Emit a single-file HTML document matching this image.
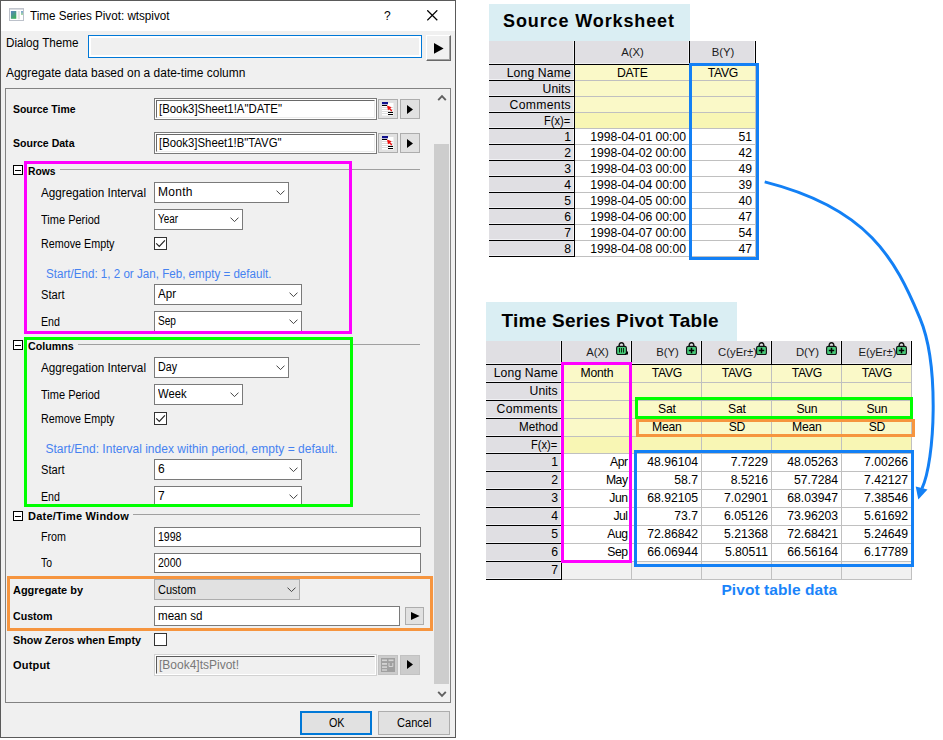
<!DOCTYPE html>
<html><head><meta charset="utf-8"><title>Time Series Pivot</title>
<style>
html,body{margin:0;padding:0;background:#fff;}
body{width:943px;height:740px;position:relative;overflow:hidden;font-family:"Liberation Sans",sans-serif;}
div,svg,.t{position:absolute;}
.t{white-space:pre;transform-origin:0 0;}
</style></head>
<body>
<div style="left:0px;top:0px;width:456px;height:738px;background:#f0f0f0;border:1px solid #5a5a5a;box-sizing:border-box;"></div>
<div style="left:1px;top:1px;width:454px;height:30px;background:#fff;"></div>
<svg style="left:9px;top:8px" width="15" height="13" viewBox="0 0 15 13">
<defs><linearGradient id="ga" x1="0" y1="0" x2="0.6" y2="1"><stop offset="0" stop-color="#5a82c4"/><stop offset="1" stop-color="#3fae5c"/></linearGradient>
<linearGradient id="gb" x1="0" y1="0" x2="0" y2="1"><stop offset="0" stop-color="#7aa0d4"/><stop offset="1" stop-color="#a8e0a0"/></linearGradient></defs>
<rect x="0.5" y="0.5" width="14" height="12" fill="#fff" stroke="#bcc1ca"/><rect x="0" y="0" width="15" height="1.6" fill="#c2c6ce"/>
<rect x="1.9" y="3" width="5.4" height="7.8" fill="url(#ga)"/><rect x="8.7" y="3" width="2.2" height="8.3" fill="#e4e4e4"/><rect x="12" y="3" width="2" height="4" fill="url(#gb)"/></svg>
<span class="t" style="left:29.80px;top:10px;font-size:12px;line-height:12px;color:#000;transform:scaleX(0.9714);">Time Series Pivot: wtspivot</span>
<span class="t" style="left:384.00px;top:10px;font-size:12px;line-height:12px;color:#000;">?</span>
<svg style="left:427px;top:9.5px" width="11" height="11" viewBox="0 0 11 11"><path d="M0.3 0.3 L10.3 10.3 M10.3 0.3 L0.3 10.3" stroke="#000" stroke-width="1.25" fill="none"/></svg>
<span class="t" style="left:5.50px;top:37px;font-size:12px;line-height:12px;color:#000;transform:scaleX(0.9734);">Dialog Theme</span>
<div style="left:88px;top:35px;width:334px;height:23px;border:1px solid #0078d7;box-sizing:border-box;background:#f0f0f0;"></div>
<div style="left:89px;top:36px;width:332px;height:21px;border:2px solid #fff;box-sizing:border-box;"></div>
<div style="left:426px;top:35px;width:25px;height:26px;box-sizing:border-box;background:#f0f0f0;border-top:1px solid #fff;border-left:1px solid #fff;border-right:1px solid #696969;border-bottom:1px solid #696969;"></div>
<div style="left:427px;top:36px;width:23px;height:24px;box-sizing:border-box;border-right:1px solid #a0a0a0;border-bottom:1px solid #a0a0a0;"></div>
<svg style="left:433.5px;top:42.8px" width="10" height="11" viewBox="0 0 10 11"><path d="M0 0 L9.6 5.4 L0 10.8 Z" fill="#000"/></svg>
<span class="t" style="left:5.50px;top:67px;font-size:12px;line-height:12px;color:#000;transform:scaleX(0.9964);">Aggregate data based on a date-time column</span>
<div style="left:5px;top:88px;width:446px;height:615px;box-sizing:border-box;border:1px solid #828282;background:#f0f0f0;"></div>
<div style="left:434px;top:89px;width:16px;height:613px;background:#f0f0f0;"></div>
<div style="left:434px;top:144px;width:15px;height:540px;background:#cdcdcd;"></div>
<svg style="left:436.7px;top:93.6px" width="10" height="7" viewBox="0 0 10 7"><path d="M1.2 6.2 L5 2.2 L8.8 6.2" stroke="#606060" stroke-width="1.9" fill="none"/></svg>
<svg style="left:436.7px;top:690.7px" width="10" height="7" viewBox="0 0 10 7"><path d="M1.2 0.8 L5 4.8 L8.8 0.8" stroke="#606060" stroke-width="1.9" fill="none"/></svg>
<span class="t" style="left:13.00px;top:104px;font-size:11px;line-height:11px;color:#000;font-weight:700;transform:scaleX(0.9494);">Source Time</span>
<div style="left:154px;top:98px;width:223px;height:22px;box-sizing:border-box;background:#fff;border:1px solid #7a7a7a;"></div>
<div style="left:156px;top:100px;width:219px;height:18px;box-sizing:border-box;border:1px solid #ececec;border-top-color:#696969;border-left-color:#696969;"></div>
<span class="t" style="left:159.00px;top:103px;font-size:12px;line-height:12px;color:#000;transform:scaleX(0.9483);">[Book3]Sheet1!A"DATE"</span>
<div style="left:378px;top:99px;width:20px;height:20px;box-sizing:border-box;background:#e1e1e1;border:1px solid #adadad;"></div>
<svg style="left:382px;top:102px" width="12" height="14" viewBox="0 0 12 14">
<rect x="0" y="1" width="11.5" height="12.5" fill="#fff"/>
<path d="M0 5.5 H11 M0 7.5 H11 M0 9.5 H11 M0 11.5 H6" stroke="#dcdcdc" stroke-width="1"/>
<rect x="0" y="0" width="6" height="2.3" fill="#10108c"/><rect x="0" y="3" width="5" height="1" fill="#000"/>
<path d="M5 3.6 L9.6 5.2 L8.2 6.3 L10.3 8.6 L9.3 9.5 L7.2 7.2 L6 8.6 Z" fill="#f01010"/>
<rect x="6" y="10" width="5.4" height="1" fill="#000" shape-rendering="crispEdges"/><rect x="6" y="12" width="5.4" height="1" fill="#000" shape-rendering="crispEdges"/></svg>
<div style="left:400px;top:99px;width:20px;height:20px;box-sizing:border-box;background:#e1e1e1;border:1px solid #adadad;"></div>
<svg style="left:407px;top:104.5px" width="6" height="9" viewBox="0 0 6 9"><path d="M0 0 L6 4.5 L0 9 Z" fill="#000"/></svg>
<span class="t" style="left:13.00px;top:138px;font-size:11px;line-height:11px;color:#000;font-weight:700;transform:scaleX(0.9579);">Source Data</span>
<div style="left:154px;top:132px;width:223px;height:22px;box-sizing:border-box;background:#fff;border:1px solid #7a7a7a;"></div>
<div style="left:156px;top:134px;width:219px;height:18px;box-sizing:border-box;border:1px solid #ececec;border-top-color:#696969;border-left-color:#696969;"></div>
<span class="t" style="left:159.00px;top:137px;font-size:12px;line-height:12px;color:#000;transform:scaleX(0.9461);">[Book3]Sheet1!B"TAVG"</span>
<div style="left:378px;top:133px;width:20px;height:20px;box-sizing:border-box;background:#e1e1e1;border:1px solid #adadad;"></div>
<svg style="left:382px;top:136px" width="12" height="14" viewBox="0 0 12 14">
<rect x="0" y="1" width="11.5" height="12.5" fill="#fff"/>
<path d="M0 5.5 H11 M0 7.5 H11 M0 9.5 H11 M0 11.5 H6" stroke="#dcdcdc" stroke-width="1"/>
<rect x="0" y="0" width="6" height="2.3" fill="#10108c"/><rect x="0" y="3" width="5" height="1" fill="#000"/>
<path d="M5 3.6 L9.6 5.2 L8.2 6.3 L10.3 8.6 L9.3 9.5 L7.2 7.2 L6 8.6 Z" fill="#f01010"/>
<rect x="6" y="10" width="5.4" height="1" fill="#000" shape-rendering="crispEdges"/><rect x="6" y="12" width="5.4" height="1" fill="#000" shape-rendering="crispEdges"/></svg>
<div style="left:400px;top:133px;width:20px;height:20px;box-sizing:border-box;background:#e1e1e1;border:1px solid #adadad;"></div>
<svg style="left:407px;top:138.5px" width="6" height="9" viewBox="0 0 6 9"><path d="M0 0 L6 4.5 L0 9 Z" fill="#000"/></svg>
<svg style="left:13px;top:165px" width="10" height="10" viewBox="0 0 10 10"><rect x="0.5" y="0.5" width="9" height="9" fill="#fff" stroke="#000" stroke-width="1.1" shape-rendering="crispEdges"/><rect x="2" y="5" width="6" height="1" fill="#000" shape-rendering="crispEdges"/></svg>
<span class="t" style="left:28.00px;top:166px;font-size:11px;line-height:11px;color:#000;font-weight:700;transform:scaleX(0.9372);">Rows</span>
<div style="left:59.5px;top:169px;width:360.5px;height:1px;background:#a0a0a0;"></div>
<span class="t" style="left:41.00px;top:187px;font-size:12px;line-height:12px;color:#000;transform:scaleX(0.9776);">Aggregation Interval</span>
<div style="left:154px;top:182px;width:135px;height:21px;box-sizing:border-box;background:#fff;border:1px solid #7a7a7a;"></div>
<span class="t" style="left:158.00px;top:186px;font-size:12px;line-height:12px;color:#000;letter-spacing:0.285px;">Month</span>
<svg style="left:275.5px;top:190px" width="9" height="6" viewBox="0 0 9 6"><path d="M0.5 0.6 L4.5 4.6 L8.5 0.6" stroke="#444" stroke-width="1" fill="none"/></svg>
<span class="t" style="left:41.00px;top:214px;font-size:12px;line-height:12px;color:#000;transform:scaleX(0.9183);">Time Period</span>
<div style="left:154px;top:209px;width:89px;height:21px;box-sizing:border-box;background:#fff;border:1px solid #7a7a7a;"></div>
<span class="t" style="left:158.00px;top:213px;font-size:12px;line-height:12px;color:#000;transform:scaleX(0.8247);">Year</span>
<svg style="left:229.5px;top:217px" width="9" height="6" viewBox="0 0 9 6"><path d="M0.5 0.6 L4.5 4.6 L8.5 0.6" stroke="#444" stroke-width="1" fill="none"/></svg>
<span class="t" style="left:41.00px;top:238px;font-size:12px;line-height:12px;color:#000;transform:scaleX(0.8960);">Remove Empty</span>
<div style="left:154px;top:237px;width:13px;height:13px;box-sizing:border-box;background:#fff;border:1px solid #333;"></div>
<svg style="left:154px;top:237px" width="13" height="13" viewBox="0 0 13 13"><path d="M2.2 6.3 L5.3 9.5 L10.9 3.4" stroke="#222" stroke-width="1.15" fill="none"/></svg>
<span class="t" style="left:45.50px;top:268px;font-size:12px;line-height:12px;color:#4682f0;transform:scaleX(0.9672);">Start/End: 1, 2 or Jan, Feb, empty = default.</span>
<span class="t" style="left:41.00px;top:289px;font-size:12px;line-height:12px;color:#000;transform:scaleX(0.9273);">Start</span>
<div style="left:154px;top:284px;width:148px;height:21px;box-sizing:border-box;background:#fff;border:1px solid #7a7a7a;"></div>
<span class="t" style="left:158.00px;top:288px;font-size:12px;line-height:12px;color:#000;transform:scaleX(0.9632);">Apr</span>
<svg style="left:288.5px;top:292px" width="9" height="6" viewBox="0 0 9 6"><path d="M0.5 0.6 L4.5 4.6 L8.5 0.6" stroke="#444" stroke-width="1" fill="none"/></svg>
<span class="t" style="left:41.00px;top:316px;font-size:12px;line-height:12px;color:#000;transform:scaleX(0.8895);">End</span>
<div style="left:154px;top:311px;width:148px;height:21px;box-sizing:border-box;background:#fff;border:1px solid #7a7a7a;"></div>
<span class="t" style="left:158.00px;top:315px;font-size:12px;line-height:12px;color:#000;transform:scaleX(0.8427);">Sep</span>
<svg style="left:288.5px;top:319px" width="9" height="6" viewBox="0 0 9 6"><path d="M0.5 0.6 L4.5 4.6 L8.5 0.6" stroke="#444" stroke-width="1" fill="none"/></svg>
<svg style="left:13px;top:340px" width="10" height="10" viewBox="0 0 10 10"><rect x="0.5" y="0.5" width="9" height="9" fill="#fff" stroke="#000" stroke-width="1.1" shape-rendering="crispEdges"/><rect x="2" y="5" width="6" height="1" fill="#000" shape-rendering="crispEdges"/></svg>
<span class="t" style="left:28.00px;top:341px;font-size:11px;line-height:11px;color:#000;font-weight:700;transform:scaleX(0.9721);">Columns</span>
<div style="left:77.75px;top:344px;width:342.25px;height:1px;background:#a0a0a0;"></div>
<span class="t" style="left:41.00px;top:362px;font-size:12px;line-height:12px;color:#000;transform:scaleX(0.9776);">Aggregation Interval</span>
<div style="left:154px;top:357px;width:135px;height:21px;box-sizing:border-box;background:#fff;border:1px solid #7a7a7a;"></div>
<span class="t" style="left:158.00px;top:361px;font-size:12px;line-height:12px;color:#000;transform:scaleX(0.8902);">Day</span>
<svg style="left:275.5px;top:365px" width="9" height="6" viewBox="0 0 9 6"><path d="M0.5 0.6 L4.5 4.6 L8.5 0.6" stroke="#444" stroke-width="1" fill="none"/></svg>
<span class="t" style="left:41.00px;top:389px;font-size:12px;line-height:12px;color:#000;transform:scaleX(0.9183);">Time Period</span>
<div style="left:154px;top:384px;width:89px;height:21px;box-sizing:border-box;background:#fff;border:1px solid #7a7a7a;"></div>
<span class="t" style="left:158.00px;top:388px;font-size:12px;line-height:12px;color:#000;transform:scaleX(0.9354);">Week</span>
<svg style="left:229.5px;top:392px" width="9" height="6" viewBox="0 0 9 6"><path d="M0.5 0.6 L4.5 4.6 L8.5 0.6" stroke="#444" stroke-width="1" fill="none"/></svg>
<span class="t" style="left:41.00px;top:413px;font-size:12px;line-height:12px;color:#000;transform:scaleX(0.8960);">Remove Empty</span>
<div style="left:154px;top:412px;width:13px;height:13px;box-sizing:border-box;background:#fff;border:1px solid #333;"></div>
<svg style="left:154px;top:412px" width="13" height="13" viewBox="0 0 13 13"><path d="M2.2 6.3 L5.3 9.5 L10.9 3.4" stroke="#222" stroke-width="1.15" fill="none"/></svg>
<span class="t" style="left:45.50px;top:443px;font-size:12px;line-height:12px;color:#4682f0;letter-spacing:0.015px;">Start/End: Interval index within period, empty = default.</span>
<span class="t" style="left:41.00px;top:464px;font-size:12px;line-height:12px;color:#000;transform:scaleX(0.9273);">Start</span>
<div style="left:154px;top:459px;width:148px;height:21px;box-sizing:border-box;background:#fff;border:1px solid #7a7a7a;"></div>
<span class="t" style="left:158.00px;top:463px;font-size:12px;line-height:12px;color:#000;">6</span>
<svg style="left:288.5px;top:467px" width="9" height="6" viewBox="0 0 9 6"><path d="M0.5 0.6 L4.5 4.6 L8.5 0.6" stroke="#444" stroke-width="1" fill="none"/></svg>
<span class="t" style="left:41.00px;top:491px;font-size:12px;line-height:12px;color:#000;transform:scaleX(0.8895);">End</span>
<div style="left:154px;top:486px;width:148px;height:21px;box-sizing:border-box;background:#fff;border:1px solid #7a7a7a;"></div>
<span class="t" style="left:158.00px;top:490px;font-size:12px;line-height:12px;color:#000;">7</span>
<svg style="left:288.5px;top:494px" width="9" height="6" viewBox="0 0 9 6"><path d="M0.5 0.6 L4.5 4.6 L8.5 0.6" stroke="#444" stroke-width="1" fill="none"/></svg>
<svg style="left:13px;top:511px" width="10" height="10" viewBox="0 0 10 10"><rect x="0.5" y="0.5" width="9" height="9" fill="#fff" stroke="#000" stroke-width="1.1" shape-rendering="crispEdges"/><rect x="2" y="5" width="6" height="1" fill="#000" shape-rendering="crispEdges"/></svg>
<span class="t" style="left:28.00px;top:511px;font-size:11px;line-height:11px;color:#000;font-weight:700;letter-spacing:0.217px;">Date/Time Window</span>
<div style="left:133px;top:514px;width:287px;height:1px;background:#a0a0a0;"></div>
<span class="t" style="left:41.00px;top:531px;font-size:12px;line-height:12px;color:#000;transform:scaleX(0.8929);">From</span>
<div style="left:154px;top:527px;width:267px;height:20px;box-sizing:border-box;background:#fff;border:1px solid #7a7a7a;"></div>
<span class="t" style="left:158.00px;top:531px;font-size:12px;line-height:12px;color:#000;transform:scaleX(0.8800);">1998</span>
<span class="t" style="left:41.00px;top:557px;font-size:12px;line-height:12px;color:#000;transform:scaleX(0.8670);">To</span>
<div style="left:154px;top:553px;width:267px;height:20px;box-sizing:border-box;background:#fff;border:1px solid #7a7a7a;"></div>
<span class="t" style="left:158.00px;top:557px;font-size:12px;line-height:12px;color:#000;transform:scaleX(0.8800);">2000</span>
<span class="t" style="left:13.00px;top:585px;font-size:11px;line-height:11px;color:#000;font-weight:700;transform:scaleX(0.9958);">Aggregate by</span>
<div style="left:154px;top:579px;width:146px;height:21px;box-sizing:border-box;background:#e1e1e1;border:1px solid #adadad;"></div>
<span class="t" style="left:158.00px;top:584px;font-size:12px;line-height:12px;color:#000;transform:scaleX(0.9191);">Custom</span>
<svg style="left:286.5px;top:587px" width="9" height="6" viewBox="0 0 9 6"><path d="M0.5 0.6 L4.5 4.6 L8.5 0.6" stroke="#444" stroke-width="1" fill="none"/></svg>
<span class="t" style="left:13.00px;top:611px;font-size:11px;line-height:11px;color:#000;font-weight:700;transform:scaleX(0.9645);">Custom</span>
<div style="left:154px;top:606px;width:246px;height:20px;box-sizing:border-box;background:#fff;border:1px solid #7a7a7a;"></div>
<span class="t" style="left:158.00px;top:610px;font-size:12px;line-height:12px;color:#000;transform:scaleX(0.9667);">mean sd</span>
<div style="left:405px;top:607px;width:19px;height:18px;box-sizing:border-box;background:#e1e1e1;border:1px solid #adadad;"></div>
<svg style="left:410.5px;top:611.8px" width="9" height="8" viewBox="0 0 9 8"><path d="M0 0 L8.6 4 L0 8 Z" fill="#000"/></svg>
<span class="t" style="left:13.00px;top:635px;font-size:11px;line-height:11px;color:#000;font-weight:700;transform:scaleX(0.9832);">Show Zeros when Empty</span>
<div style="left:154px;top:633px;width:13px;height:13px;box-sizing:border-box;background:#fff;border:1px solid #333;"></div>
<span class="t" style="left:13.00px;top:660px;font-size:11px;line-height:11px;color:#000;font-weight:700;letter-spacing:0.191px;">Output</span>
<div style="left:154px;top:654px;width:223px;height:22px;box-sizing:border-box;background:#fff;border:1px solid #d2d2d2;"></div>
<div style="left:156px;top:656px;width:219px;height:18px;box-sizing:border-box;background:#f0f0f0;border:1px solid #f0f0f0;border-top-color:#5a5a5a;border-left-color:#5a5a5a;"></div>
<span class="t" style="left:159.00px;top:659px;font-size:12px;line-height:12px;color:#787878;transform:scaleX(0.9994);">[Book4]tsPivot!</span>
<div style="left:378px;top:655px;width:20px;height:20px;box-sizing:border-box;background:#cccccc;border:1px solid #c2c2c2;"></div>
<svg style="left:381px;top:658px" width="14" height="14" viewBox="0 0 14 14"><rect x="0" y="0" width="14" height="14" fill="#a0a0a0"/><rect x="1" y="1.5" width="5" height="1.6" fill="#d4d4d4"/><rect x="7.5" y="1.5" width="5" height="1.6" fill="#d4d4d4"/><rect x="1" y="5" width="5" height="1.8" fill="#d4d4d4"/><rect x="1" y="8.3" width="5" height="1.6" fill="#d4d4d4"/><rect x="1" y="11.3" width="5" height="1.4" fill="#d4d4d4"/><path d="M8 5 V8.5 H11.8 V5" stroke="#d4d4d4" stroke-width="1" fill="none"/></svg>
<div style="left:400px;top:655px;width:20px;height:20px;box-sizing:border-box;background:#cccccc;border:1px solid #c2c2c2;"></div>
<svg style="left:407px;top:660px" width="6" height="9" viewBox="0 0 6 9"><path d="M0 0 L6 4.5 L0 9 Z" fill="#000"/></svg>
<div style="left:24px;top:161px;width:328px;height:173px;box-sizing:border-box;border:3px solid #ff00ff;"></div>
<div style="left:24px;top:337px;width:329px;height:170px;box-sizing:border-box;border:3px solid #00ff00;"></div>
<div style="left:7px;top:576px;width:426px;height:55px;box-sizing:border-box;border:3px solid #f6953f;"></div>
<div style="left:300px;top:711px;width:72px;height:24px;box-sizing:border-box;background:#e1e1e1;border:2px solid #0078d7;"></div>
<span class="t" style="left:328.50px;top:717px;font-size:12px;line-height:12px;color:#000;transform:scaleX(0.8937);">OK</span>
<div style="left:378px;top:711px;width:72px;height:24px;box-sizing:border-box;background:#e1e1e1;border:1px solid #adadad;"></div>
<span class="t" style="left:396.85px;top:717px;font-size:12px;line-height:12px;color:#000;transform:scaleX(0.9235);">Cancel</span>
<div style="left:489px;top:4px;width:201px;height:37px;background:#daeef3;"></div>
<span class="t" style="left:503.00px;top:12px;font-size:18px;line-height:18px;color:#000;font-weight:700;letter-spacing:0.884px;">Source Worksheet</span>
<div style="left:489px;top:41px;width:267px;height:216px;background:#e0dfe3;"></div>
<div style="left:575px;top:65px;width:181px;height:16px;background:#faf9c8;"></div>
<div style="left:575px;top:81px;width:181px;height:16px;background:#faf9c8;"></div>
<div style="left:575px;top:97px;width:181px;height:16px;background:#faf9c8;"></div>
<div style="left:575px;top:113px;width:181px;height:16px;background:#f8f6b4;"></div>
<div style="left:575px;top:129px;width:181px;height:128px;background:#fff;"></div>
<div style="left:489px;top:63px;width:267px;height:1px;background:#f1f1f4;"></div>
<div style="left:573px;top:41px;width:1px;height:216px;background:#f1f1f4;"></div>
<div style="left:688px;top:41px;width:1px;height:23px;background:#f1f1f4;"></div>
<div style="left:754px;top:41px;width:1px;height:23px;background:#f1f1f4;"></div>
<div style="left:489px;top:79px;width:85px;height:1px;background:#f1f1f4;"></div>
<div style="left:489px;top:95px;width:85px;height:1px;background:#f1f1f4;"></div>
<div style="left:489px;top:111px;width:85px;height:1px;background:#f1f1f4;"></div>
<div style="left:489px;top:127px;width:85px;height:1px;background:#f1f1f4;"></div>
<div style="left:489px;top:143px;width:85px;height:1px;background:#f1f1f4;"></div>
<div style="left:489px;top:159px;width:85px;height:1px;background:#f1f1f4;"></div>
<div style="left:489px;top:175px;width:85px;height:1px;background:#f1f1f4;"></div>
<div style="left:489px;top:191px;width:85px;height:1px;background:#f1f1f4;"></div>
<div style="left:489px;top:207px;width:85px;height:1px;background:#f1f1f4;"></div>
<div style="left:489px;top:223px;width:85px;height:1px;background:#f1f1f4;"></div>
<div style="left:489px;top:239px;width:85px;height:1px;background:#f1f1f4;"></div>
<div style="left:489px;top:255px;width:85px;height:1px;background:#f1f1f4;"></div>
<div style="left:575px;top:80px;width:181px;height:1px;background:#c0c0c0;"></div>
<div style="left:575px;top:96px;width:181px;height:1px;background:#c0c0c0;"></div>
<div style="left:575px;top:112px;width:181px;height:1px;background:#c0c0c0;"></div>
<div style="left:575px;top:128px;width:181px;height:1px;background:#c0c0c0;"></div>
<div style="left:575px;top:144px;width:181px;height:1px;background:#c0c0c0;"></div>
<div style="left:575px;top:160px;width:181px;height:1px;background:#c0c0c0;"></div>
<div style="left:575px;top:176px;width:181px;height:1px;background:#c0c0c0;"></div>
<div style="left:575px;top:192px;width:181px;height:1px;background:#c0c0c0;"></div>
<div style="left:575px;top:208px;width:181px;height:1px;background:#c0c0c0;"></div>
<div style="left:575px;top:224px;width:181px;height:1px;background:#c0c0c0;"></div>
<div style="left:575px;top:240px;width:181px;height:1px;background:#c0c0c0;"></div>
<div style="left:575px;top:256px;width:181px;height:1px;background:#c0c0c0;"></div>
<div style="left:689px;top:65px;width:1px;height:192px;background:#c0c0c0;"></div>
<div style="left:755px;top:65px;width:1px;height:192px;background:#c0c0c0;"></div>
<div style="left:489px;top:64px;width:267px;height:1px;background:#000;"></div>
<div style="left:574px;top:41px;width:1px;height:216px;background:#000;"></div>
<div style="left:689px;top:41px;width:1px;height:24px;background:#000;"></div>
<div style="left:755px;top:41px;width:1px;height:24px;background:#000;"></div>
<div style="left:489px;top:80px;width:86px;height:1px;background:#000;"></div>
<div style="left:489px;top:96px;width:86px;height:1px;background:#000;"></div>
<div style="left:489px;top:112px;width:86px;height:1px;background:#000;"></div>
<div style="left:489px;top:128px;width:86px;height:1px;background:#000;"></div>
<div style="left:489px;top:144px;width:86px;height:1px;background:#000;"></div>
<div style="left:489px;top:160px;width:86px;height:1px;background:#000;"></div>
<div style="left:489px;top:176px;width:86px;height:1px;background:#000;"></div>
<div style="left:489px;top:192px;width:86px;height:1px;background:#000;"></div>
<div style="left:489px;top:208px;width:86px;height:1px;background:#000;"></div>
<div style="left:489px;top:224px;width:86px;height:1px;background:#000;"></div>
<div style="left:489px;top:240px;width:86px;height:1px;background:#000;"></div>
<div style="left:489px;top:256px;width:86px;height:1px;background:#000;"></div>
<span class="t" style="left:621.20px;top:47px;font-size:11.3px;line-height:11.3px;color:#1c1c1c;">A(X)</span>
<span class="t" style="left:711.70px;top:47px;font-size:11.3px;line-height:11.3px;color:#1c1c1c;">B(Y)</span>
<span class="t" style="left:506.70px;top:67px;font-size:12.2px;line-height:12.2px;color:#000;letter-spacing:0.123px;">Long Name</span>
<span class="t" style="left:617.07px;top:67px;font-size:12.2px;line-height:12.2px;color:#000;letter-spacing:-0.250px;">DATE</span>
<span class="t" style="left:707.69px;top:67px;font-size:12.2px;line-height:12.2px;color:#000;letter-spacing:-0.250px;">TAVG</span>
<span class="t" style="left:542.50px;top:83px;font-size:12.2px;line-height:12.2px;color:#000;letter-spacing:0.105px;">Units</span>
<span class="t" style="left:509.60px;top:99px;font-size:12.2px;line-height:12.2px;color:#000;letter-spacing:0.311px;">Comments</span>
<span class="t" style="left:544.40px;top:115px;font-size:12.2px;line-height:12.2px;color:#000;transform:scaleX(0.9138);">F(x)=</span>
<span class="t" style="left:564.22px;top:131px;font-size:12.2px;line-height:12.2px;color:#000;letter-spacing:0.150px;">1</span>
<span class="t" style="left:590.22px;top:131px;font-size:12.2px;line-height:12.2px;color:#000;letter-spacing:-0.030px;">1998-04-01 00:00</span>
<span class="t" style="left:738.47px;top:131px;font-size:12.2px;line-height:12.2px;color:#000;letter-spacing:-0.030px;">51</span>
<span class="t" style="left:564.22px;top:147px;font-size:12.2px;line-height:12.2px;color:#000;letter-spacing:0.150px;">2</span>
<span class="t" style="left:590.22px;top:147px;font-size:12.2px;line-height:12.2px;color:#000;letter-spacing:-0.030px;">1998-04-02 00:00</span>
<span class="t" style="left:738.47px;top:147px;font-size:12.2px;line-height:12.2px;color:#000;letter-spacing:-0.030px;">42</span>
<span class="t" style="left:564.22px;top:163px;font-size:12.2px;line-height:12.2px;color:#000;letter-spacing:0.150px;">3</span>
<span class="t" style="left:590.22px;top:163px;font-size:12.2px;line-height:12.2px;color:#000;letter-spacing:-0.030px;">1998-04-03 00:00</span>
<span class="t" style="left:738.47px;top:163px;font-size:12.2px;line-height:12.2px;color:#000;letter-spacing:-0.030px;">49</span>
<span class="t" style="left:564.22px;top:179px;font-size:12.2px;line-height:12.2px;color:#000;letter-spacing:0.150px;">4</span>
<span class="t" style="left:590.22px;top:179px;font-size:12.2px;line-height:12.2px;color:#000;letter-spacing:-0.030px;">1998-04-04 00:00</span>
<span class="t" style="left:738.47px;top:179px;font-size:12.2px;line-height:12.2px;color:#000;letter-spacing:-0.030px;">39</span>
<span class="t" style="left:564.22px;top:195px;font-size:12.2px;line-height:12.2px;color:#000;letter-spacing:0.150px;">5</span>
<span class="t" style="left:590.22px;top:195px;font-size:12.2px;line-height:12.2px;color:#000;letter-spacing:-0.030px;">1998-04-05 00:00</span>
<span class="t" style="left:738.47px;top:195px;font-size:12.2px;line-height:12.2px;color:#000;letter-spacing:-0.030px;">40</span>
<span class="t" style="left:564.22px;top:211px;font-size:12.2px;line-height:12.2px;color:#000;letter-spacing:0.150px;">6</span>
<span class="t" style="left:590.22px;top:211px;font-size:12.2px;line-height:12.2px;color:#000;letter-spacing:-0.030px;">1998-04-06 00:00</span>
<span class="t" style="left:738.47px;top:211px;font-size:12.2px;line-height:12.2px;color:#000;letter-spacing:-0.030px;">47</span>
<span class="t" style="left:564.22px;top:227px;font-size:12.2px;line-height:12.2px;color:#000;letter-spacing:0.150px;">7</span>
<span class="t" style="left:590.22px;top:227px;font-size:12.2px;line-height:12.2px;color:#000;letter-spacing:-0.030px;">1998-04-07 00:00</span>
<span class="t" style="left:738.47px;top:227px;font-size:12.2px;line-height:12.2px;color:#000;letter-spacing:-0.030px;">54</span>
<span class="t" style="left:564.22px;top:243px;font-size:12.2px;line-height:12.2px;color:#000;letter-spacing:0.150px;">8</span>
<span class="t" style="left:590.22px;top:243px;font-size:12.2px;line-height:12.2px;color:#000;letter-spacing:-0.030px;">1998-04-08 00:00</span>
<span class="t" style="left:738.47px;top:243px;font-size:12.2px;line-height:12.2px;color:#000;letter-spacing:-0.030px;">47</span>
<div style="left:689px;top:63px;width:70px;height:197px;box-sizing:border-box;border:3px solid #1380f5;"></div>
<div style="left:486px;top:302px;width:251px;height:39px;background:#daeef3;"></div>
<span class="t" style="left:501.50px;top:311px;font-size:19px;line-height:19px;color:#000;font-weight:700;letter-spacing:0.247px;">Time Series Pivot Table</span>
<div style="left:486px;top:341px;width:426px;height:239px;background:#e0dfe3;"></div>
<div style="left:562px;top:365px;width:350px;height:18px;background:#faf9c8;"></div>
<div style="left:562px;top:383px;width:350px;height:18px;background:#faf9c8;"></div>
<div style="left:562px;top:401px;width:350px;height:18px;background:#faf9c8;"></div>
<div style="left:562px;top:419px;width:350px;height:18px;background:#faf9c8;"></div>
<div style="left:562px;top:437px;width:350px;height:17px;background:#f8f6b4;"></div>
<div style="left:562px;top:454px;width:350px;height:108px;background:#fff;"></div>
<div style="left:562px;top:562px;width:350px;height:18px;background:#f1f1f1;"></div>
<div style="left:486px;top:363px;width:426px;height:1px;background:#f1f1f4;"></div>
<div style="left:560px;top:341px;width:1px;height:239px;background:#f1f1f4;"></div>
<div style="left:630px;top:341px;width:1px;height:23px;background:#f1f1f4;"></div>
<div style="left:700px;top:341px;width:1px;height:23px;background:#f1f1f4;"></div>
<div style="left:770px;top:341px;width:1px;height:23px;background:#f1f1f4;"></div>
<div style="left:840px;top:341px;width:1px;height:23px;background:#f1f1f4;"></div>
<div style="left:910px;top:341px;width:1px;height:23px;background:#f1f1f4;"></div>
<div style="left:486px;top:381px;width:75px;height:1px;background:#f1f1f4;"></div>
<div style="left:486px;top:399px;width:75px;height:1px;background:#f1f1f4;"></div>
<div style="left:486px;top:417px;width:75px;height:1px;background:#f1f1f4;"></div>
<div style="left:486px;top:435px;width:75px;height:1px;background:#f1f1f4;"></div>
<div style="left:486px;top:452px;width:75px;height:1px;background:#f1f1f4;"></div>
<div style="left:486px;top:470px;width:75px;height:1px;background:#f1f1f4;"></div>
<div style="left:486px;top:488px;width:75px;height:1px;background:#f1f1f4;"></div>
<div style="left:486px;top:506px;width:75px;height:1px;background:#f1f1f4;"></div>
<div style="left:486px;top:524px;width:75px;height:1px;background:#f1f1f4;"></div>
<div style="left:486px;top:542px;width:75px;height:1px;background:#f1f1f4;"></div>
<div style="left:486px;top:560px;width:75px;height:1px;background:#f1f1f4;"></div>
<div style="left:486px;top:578px;width:75px;height:1px;background:#f1f1f4;"></div>
<div style="left:562px;top:382px;width:350px;height:1px;background:#c0c0c0;"></div>
<div style="left:562px;top:400px;width:350px;height:1px;background:#c0c0c0;"></div>
<div style="left:562px;top:418px;width:350px;height:1px;background:#c0c0c0;"></div>
<div style="left:562px;top:436px;width:350px;height:1px;background:#c0c0c0;"></div>
<div style="left:562px;top:453px;width:350px;height:1px;background:#c0c0c0;"></div>
<div style="left:562px;top:471px;width:350px;height:1px;background:#c0c0c0;"></div>
<div style="left:562px;top:489px;width:350px;height:1px;background:#c0c0c0;"></div>
<div style="left:562px;top:507px;width:350px;height:1px;background:#c0c0c0;"></div>
<div style="left:562px;top:525px;width:350px;height:1px;background:#c0c0c0;"></div>
<div style="left:562px;top:543px;width:350px;height:1px;background:#c0c0c0;"></div>
<div style="left:562px;top:561px;width:350px;height:1px;background:#c0c0c0;"></div>
<div style="left:562px;top:579px;width:350px;height:1px;background:#c0c0c0;"></div>
<div style="left:631px;top:365px;width:1px;height:215px;background:#c0c0c0;"></div>
<div style="left:701px;top:365px;width:1px;height:215px;background:#c0c0c0;"></div>
<div style="left:771px;top:365px;width:1px;height:215px;background:#c0c0c0;"></div>
<div style="left:841px;top:365px;width:1px;height:215px;background:#c0c0c0;"></div>
<div style="left:911px;top:365px;width:1px;height:215px;background:#c0c0c0;"></div>
<div style="left:486px;top:364px;width:426px;height:1px;background:#000;"></div>
<div style="left:561px;top:341px;width:1px;height:239px;background:#000;"></div>
<div style="left:631px;top:341px;width:1px;height:24px;background:#000;"></div>
<div style="left:701px;top:341px;width:1px;height:24px;background:#000;"></div>
<div style="left:771px;top:341px;width:1px;height:24px;background:#000;"></div>
<div style="left:841px;top:341px;width:1px;height:24px;background:#000;"></div>
<div style="left:911px;top:341px;width:1px;height:24px;background:#000;"></div>
<div style="left:486px;top:382px;width:76px;height:1px;background:#000;"></div>
<div style="left:486px;top:400px;width:76px;height:1px;background:#000;"></div>
<div style="left:486px;top:418px;width:76px;height:1px;background:#000;"></div>
<div style="left:486px;top:436px;width:76px;height:1px;background:#000;"></div>
<div style="left:486px;top:453px;width:76px;height:1px;background:#000;"></div>
<div style="left:486px;top:471px;width:76px;height:1px;background:#000;"></div>
<div style="left:486px;top:489px;width:76px;height:1px;background:#000;"></div>
<div style="left:486px;top:507px;width:76px;height:1px;background:#000;"></div>
<div style="left:486px;top:525px;width:76px;height:1px;background:#000;"></div>
<div style="left:486px;top:543px;width:76px;height:1px;background:#000;"></div>
<div style="left:486px;top:561px;width:76px;height:1px;background:#000;"></div>
<div style="left:486px;top:579px;width:76px;height:1px;background:#000;"></div>
<span class="t" style="left:586.20px;top:347px;font-size:11.3px;line-height:11.3px;color:#1c1c1c;">A(X)</span>
<span class="t" style="left:656.20px;top:347px;font-size:11.3px;line-height:11.3px;color:#1c1c1c;">B(Y)</span>
<span class="t" style="left:718.09px;top:347px;font-size:11.3px;line-height:11.3px;color:#1c1c1c;">C(yEr±)</span>
<span class="t" style="left:795.89px;top:347px;font-size:11.3px;line-height:11.3px;color:#1c1c1c;">D(Y)</span>
<span class="t" style="left:858.39px;top:347px;font-size:11.3px;line-height:11.3px;color:#1c1c1c;">E(yEr±)</span>
<span class="t" style="left:493.70px;top:367px;font-size:12.2px;line-height:12.2px;color:#000;letter-spacing:0.123px;">Long Name</span>
<span class="t" style="left:580.56px;top:367px;font-size:12.2px;line-height:12.2px;color:#000;letter-spacing:-0.250px;">Month</span>
<span class="t" style="left:651.69px;top:367px;font-size:12.2px;line-height:12.2px;color:#000;letter-spacing:-0.250px;">TAVG</span>
<span class="t" style="left:721.69px;top:367px;font-size:12.2px;line-height:12.2px;color:#000;letter-spacing:-0.250px;">TAVG</span>
<span class="t" style="left:791.69px;top:367px;font-size:12.2px;line-height:12.2px;color:#000;letter-spacing:-0.250px;">TAVG</span>
<span class="t" style="left:861.69px;top:367px;font-size:12.2px;line-height:12.2px;color:#000;letter-spacing:-0.250px;">TAVG</span>
<span class="t" style="left:529.50px;top:385px;font-size:12.2px;line-height:12.2px;color:#000;letter-spacing:0.105px;">Units</span>
<span class="t" style="left:496.60px;top:403px;font-size:12.2px;line-height:12.2px;color:#000;letter-spacing:0.311px;">Comments</span>
<span class="t" style="left:658.10px;top:403px;font-size:12.2px;line-height:12.2px;color:#000;letter-spacing:-0.250px;">Sat</span>
<span class="t" style="left:728.10px;top:403px;font-size:12.2px;line-height:12.2px;color:#000;letter-spacing:-0.250px;">Sat</span>
<span class="t" style="left:796.41px;top:403px;font-size:12.2px;line-height:12.2px;color:#000;letter-spacing:-0.250px;">Sun</span>
<span class="t" style="left:866.41px;top:403px;font-size:12.2px;line-height:12.2px;color:#000;letter-spacing:-0.250px;">Sun</span>
<span class="t" style="left:518.70px;top:421px;font-size:12.2px;line-height:12.2px;color:#000;transform:scaleX(0.9593);">Method</span>
<span class="t" style="left:652.12px;top:421px;font-size:12.2px;line-height:12.2px;color:#000;letter-spacing:-0.250px;">Mean</span>
<span class="t" style="left:728.66px;top:421px;font-size:12.2px;line-height:12.2px;color:#000;letter-spacing:-0.250px;">SD</span>
<span class="t" style="left:792.12px;top:421px;font-size:12.2px;line-height:12.2px;color:#000;letter-spacing:-0.250px;">Mean</span>
<span class="t" style="left:868.66px;top:421px;font-size:12.2px;line-height:12.2px;color:#000;letter-spacing:-0.250px;">SD</span>
<span class="t" style="left:531.40px;top:439px;font-size:12.2px;line-height:12.2px;color:#000;transform:scaleX(0.9138);">F(x)=</span>
<span class="t" style="left:551.22px;top:456px;font-size:12.2px;line-height:12.2px;color:#000;letter-spacing:0.150px;">1</span>
<span class="t" style="left:610.03px;top:456px;font-size:12.2px;line-height:12.2px;color:#000;letter-spacing:-0.500px;">Apr</span>
<span class="t" style="left:647.37px;top:456px;font-size:12.2px;line-height:12.2px;color:#000;letter-spacing:-0.030px;">48.96104</span>
<span class="t" style="left:730.87px;top:456px;font-size:12.2px;line-height:12.2px;color:#000;letter-spacing:-0.030px;">7.7229</span>
<span class="t" style="left:787.37px;top:456px;font-size:12.2px;line-height:12.2px;color:#000;letter-spacing:-0.030px;">48.05263</span>
<span class="t" style="left:864.12px;top:456px;font-size:12.2px;line-height:12.2px;color:#000;letter-spacing:-0.030px;">7.00266</span>
<span class="t" style="left:551.22px;top:474px;font-size:12.2px;line-height:12.2px;color:#000;letter-spacing:0.150px;">2</span>
<span class="t" style="left:605.97px;top:474px;font-size:12.2px;line-height:12.2px;color:#000;letter-spacing:-0.500px;">May</span>
<span class="t" style="left:674.36px;top:474px;font-size:12.2px;line-height:12.2px;color:#000;letter-spacing:-0.030px;">58.7</span>
<span class="t" style="left:730.87px;top:474px;font-size:12.2px;line-height:12.2px;color:#000;letter-spacing:-0.030px;">8.5216</span>
<span class="t" style="left:794.12px;top:474px;font-size:12.2px;line-height:12.2px;color:#000;letter-spacing:-0.030px;">57.7284</span>
<span class="t" style="left:864.12px;top:474px;font-size:12.2px;line-height:12.2px;color:#000;letter-spacing:-0.030px;">7.42127</span>
<span class="t" style="left:551.22px;top:492px;font-size:12.2px;line-height:12.2px;color:#000;letter-spacing:0.150px;">3</span>
<span class="t" style="left:609.34px;top:492px;font-size:12.2px;line-height:12.2px;color:#000;letter-spacing:-0.500px;">Jun</span>
<span class="t" style="left:647.37px;top:492px;font-size:12.2px;line-height:12.2px;color:#000;letter-spacing:-0.030px;">68.92105</span>
<span class="t" style="left:724.12px;top:492px;font-size:12.2px;line-height:12.2px;color:#000;letter-spacing:-0.030px;">7.02901</span>
<span class="t" style="left:787.37px;top:492px;font-size:12.2px;line-height:12.2px;color:#000;letter-spacing:-0.030px;">68.03947</span>
<span class="t" style="left:864.12px;top:492px;font-size:12.2px;line-height:12.2px;color:#000;letter-spacing:-0.030px;">7.38546</span>
<span class="t" style="left:551.22px;top:510px;font-size:12.2px;line-height:12.2px;color:#000;letter-spacing:0.150px;">4</span>
<span class="t" style="left:613.41px;top:510px;font-size:12.2px;line-height:12.2px;color:#000;letter-spacing:-0.500px;">Jul</span>
<span class="t" style="left:674.36px;top:510px;font-size:12.2px;line-height:12.2px;color:#000;letter-spacing:-0.030px;">73.7</span>
<span class="t" style="left:724.12px;top:510px;font-size:12.2px;line-height:12.2px;color:#000;letter-spacing:-0.030px;">6.05126</span>
<span class="t" style="left:787.37px;top:510px;font-size:12.2px;line-height:12.2px;color:#000;letter-spacing:-0.030px;">73.96203</span>
<span class="t" style="left:864.12px;top:510px;font-size:12.2px;line-height:12.2px;color:#000;letter-spacing:-0.030px;">5.61692</span>
<span class="t" style="left:551.22px;top:528px;font-size:12.2px;line-height:12.2px;color:#000;letter-spacing:0.150px;">5</span>
<span class="t" style="left:607.31px;top:528px;font-size:12.2px;line-height:12.2px;color:#000;letter-spacing:-0.500px;">Aug</span>
<span class="t" style="left:647.37px;top:528px;font-size:12.2px;line-height:12.2px;color:#000;letter-spacing:-0.030px;">72.86842</span>
<span class="t" style="left:724.12px;top:528px;font-size:12.2px;line-height:12.2px;color:#000;letter-spacing:-0.030px;">5.21368</span>
<span class="t" style="left:787.37px;top:528px;font-size:12.2px;line-height:12.2px;color:#000;letter-spacing:-0.030px;">72.68421</span>
<span class="t" style="left:864.12px;top:528px;font-size:12.2px;line-height:12.2px;color:#000;letter-spacing:-0.030px;">5.24649</span>
<span class="t" style="left:551.22px;top:546px;font-size:12.2px;line-height:12.2px;color:#000;letter-spacing:0.150px;">6</span>
<span class="t" style="left:607.31px;top:546px;font-size:12.2px;line-height:12.2px;color:#000;letter-spacing:-0.500px;">Sep</span>
<span class="t" style="left:647.37px;top:546px;font-size:12.2px;line-height:12.2px;color:#000;letter-spacing:-0.030px;">66.06944</span>
<span class="t" style="left:725.02px;top:546px;font-size:12.2px;line-height:12.2px;color:#000;letter-spacing:-0.030px;">5.80511</span>
<span class="t" style="left:787.37px;top:546px;font-size:12.2px;line-height:12.2px;color:#000;letter-spacing:-0.030px;">66.56164</span>
<span class="t" style="left:864.12px;top:546px;font-size:12.2px;line-height:12.2px;color:#000;letter-spacing:-0.030px;">6.17789</span>
<span class="t" style="left:551.22px;top:564px;font-size:12.2px;line-height:12.2px;color:#000;letter-spacing:0.150px;">7</span>
<svg style="left:616px;top:342.4px" width="13" height="13" viewBox="0 0 13 13">
<path d="M3.2 5 V3 A2.3 2.3 0 0 1 7.8 3 V5" stroke="#1a1a1a" stroke-width="1.5" fill="none"/>
<rect x="0.6" y="4.4" width="9.8" height="8.2" rx="1.6" fill="#46c878" stroke="#101010" stroke-width="1.1"/>
<path d="M3.5 6 V10.5 M5.5 6 V10.5 M7.5 6 V10.5" stroke="#0a2a0a" stroke-width="1"/><path d="M12 9 V12.5 H8.5 Z" fill="#000"/></svg>
<svg style="left:686px;top:342.4px" width="13" height="13" viewBox="0 0 13 13">
<path d="M3.2 5 V3 A2.3 2.3 0 0 1 7.8 3 V5" stroke="#1a1a1a" stroke-width="1.5" fill="none"/>
<rect x="0.6" y="4.4" width="9.8" height="8.2" rx="1.6" fill="#46c878" stroke="#101010" stroke-width="1.1"/>
<path d="M5.5 5.8 V11.2 M2.8 8.5 H8.2" stroke="#000" stroke-width="1.5"/></svg>
<svg style="left:756px;top:342.4px" width="13" height="13" viewBox="0 0 13 13">
<path d="M3.2 5 V3 A2.3 2.3 0 0 1 7.8 3 V5" stroke="#1a1a1a" stroke-width="1.5" fill="none"/>
<rect x="0.6" y="4.4" width="9.8" height="8.2" rx="1.6" fill="#46c878" stroke="#101010" stroke-width="1.1"/>
<path d="M5.5 5.8 V11.2 M2.8 8.5 H8.2" stroke="#000" stroke-width="1.5"/></svg>
<svg style="left:826px;top:342.4px" width="13" height="13" viewBox="0 0 13 13">
<path d="M3.2 5 V3 A2.3 2.3 0 0 1 7.8 3 V5" stroke="#1a1a1a" stroke-width="1.5" fill="none"/>
<rect x="0.6" y="4.4" width="9.8" height="8.2" rx="1.6" fill="#46c878" stroke="#101010" stroke-width="1.1"/>
<path d="M5.5 5.8 V11.2 M2.8 8.5 H8.2" stroke="#000" stroke-width="1.5"/></svg>
<svg style="left:896px;top:342.4px" width="13" height="13" viewBox="0 0 13 13">
<path d="M3.2 5 V3 A2.3 2.3 0 0 1 7.8 3 V5" stroke="#1a1a1a" stroke-width="1.5" fill="none"/>
<rect x="0.6" y="4.4" width="9.8" height="8.2" rx="1.6" fill="#46c878" stroke="#101010" stroke-width="1.1"/>
<path d="M5.5 5.8 V11.2 M2.8 8.5 H8.2" stroke="#000" stroke-width="1.5"/></svg>
<div style="left:561px;top:362px;width:71px;height:201px;box-sizing:border-box;border:3px solid #ff00ff;"></div>
<div style="left:635px;top:397px;width:278px;height:22px;box-sizing:border-box;border:3px solid #00ff00;"></div>
<div style="left:636px;top:419px;width:279px;height:18px;box-sizing:border-box;border:3px solid #f6953f;"></div>
<div style="left:634px;top:450px;width:280px;height:117px;box-sizing:border-box;border:3px solid #1380f5;"></div>
<span class="t" style="left:721.40px;top:582px;font-size:15.5px;line-height:15.5px;color:#1a84fa;font-weight:700;letter-spacing:0.082px;">Pivot table data</span>
<svg style="left:0;top:0" width="943" height="740" viewBox="0 0 943 740">
<path d="M764.7 181.9 C 868.7 208.2, 895.1 259.2, 919.8 317.8 C 939.6 364.7, 934.9 460.6, 922 488.4" stroke="#1380f5" stroke-width="3" fill="none"/>
<path d="M915.7 486.4 L927.5 489.6 L918.3 499.5 Z" fill="#1380f5"/></svg>
</body></html>
